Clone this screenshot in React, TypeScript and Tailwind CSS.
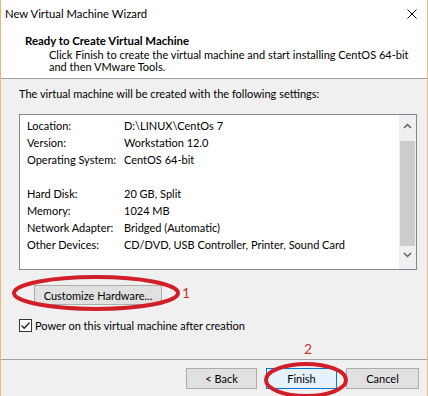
import React from "react";

const rows: [string, string][] = [
  ["Location:", "D:\\LINUX\\CentOs 7"],
  ["Version:", "Workstation 12.0"],
  ["Operating System:", "CentOS 64-bit"],
  ["", ""],
  ["Hard Disk:", "20 GB, Split"],
  ["Memory:", "1024 MB"],
  ["Network Adapter:", "Bridged (Automatic)"],
  ["Other Devices:", "CD/DVD, USB Controller, Printer, Sound Card"],
];

const font = { fontFamily: '"Lato", "Noto Sans", sans-serif' };

const App = () => {
  return (
    <div
      className="relative w-[428px] h-[396px] overflow-hidden bg-[#f0f0f0] border-x border-[#efb56c] text-[11px] text-black leading-[17px] whitespace-nowrap"
      style={font}
    >
      {/* TITLE BAR */}
      <div className="bg-white h-[30px] flex items-start justify-between">
        <span className="pl-[4px] pt-[5px] text-[11.3px]">New Virtual Machine Wizard</span>
        <svg className="mt-[9px] mr-[10px]" width="10" height="10" viewBox="0 0 10 10">
          <path d="M0.5 0.5 L9.5 9.5 M9.5 0.5 L0.5 9.5" stroke="#000" strokeWidth="1" />
        </svg>
      </div>

      {/* HEADER */}
      <div className="bg-white h-[49px] pt-[3px] border-b border-[#a0a0a0]">
        <p className="pl-[24px] font-bold text-[11.4px] leading-[15px]">Ready to Create Virtual Machine</p>
        <p className="pl-[48px] leading-[12px] pt-[1px]">
          Click Finish to create the virtual machine and start installing CentOS 64-bit
          <br />
          and then VMware Tools.
        </p>
      </div>

      {/* BODY */}
      <div className="px-[18px]">
        <p className="pt-[6px]">The virtual machine will be created with the following settings:</p>

        {/* SETTINGS LIST */}
        <div className="mt-[12px] h-[156px] w-[398px] border border-[#828790] bg-white flex">
          <div className="flex-1 pt-[2px] pl-[7px]">
            {rows.map(([k, v], i) => (
              <div key={i} className="flex h-[17px] items-center">
                <span className="w-[97px]">{k}</span>
                <span>{v}</span>
              </div>
            ))}
          </div>
          <div className="w-[17px] bg-[#f0f0f0] flex flex-col items-center">
            <svg className="mt-[8px]" width="9" height="6" viewBox="0 0 9 6">
              <path d="M1 5 L4.5 1.5 L8 5" stroke="#606060" strokeWidth="1.5" fill="none" />
            </svg>
            <div className="mt-[12px] w-[15px] h-[105px] bg-[#cdcdcd]" />
            <svg className="mt-[6px]" width="9" height="6" viewBox="0 0 9 6">
              <path d="M1 1 L4.5 4.5 L8 1" stroke="#606060" strokeWidth="1.5" fill="none" />
            </svg>
          </div>
        </div>

        {/* CUSTOMIZE */}
        <button className="mt-[15px] ml-[15px] w-[128px] h-[20px] border border-[#adadad] bg-[#e1e1e1] flex items-center justify-center">
          Customize Hardware...
        </button>

        {/* POWER ON CHECKBOX */}
        <label className="mt-[12px] flex items-center gap-[3px]">
          <span className="w-[13px] h-[13px] border border-[#333] bg-white flex items-center justify-center">
            <svg width="11" height="11" viewBox="0 0 11 11">
              <path d="M1.5 5.5 L4.2 8.3 L9.5 2.5" stroke="#222" strokeWidth="1.3" fill="none" />
            </svg>
          </span>
          <span>Power on this virtual machine after creation</span>
        </label>
      </div>

      {/* FOOTER */}
      <div className="mt-[25px] border-t border-[#a0a0a0] flex justify-end gap-[9px] pr-[8px] pt-[8px]">
        <button className="w-[71px] h-[21px] border border-[#adadad] bg-[#e1e1e1]">&lt; Back</button>
        <button className="w-[71px] h-[21px] border border-[#0078d7] bg-[#e5f1fb]">Finish</button>
        <button className="w-[73px] h-[21px] border border-[#adadad] bg-[#e1e1e1]">Cancel</button>
      </div>

      {/* ANNOTATIONS */}
      <svg className="absolute left-0 top-0 pointer-events-none" width="428" height="396">
        <ellipse cx="95" cy="293" rx="82" ry="16" fill="none" stroke="#d11f2a" strokeWidth="4" />
        <ellipse cx="305" cy="380" rx="40" ry="16" fill="none" stroke="#d11f2a" strokeWidth="4" />
      </svg>
      <span className="absolute left-[181px] top-[284px] text-[14px] text-[#c0392b]">1</span>
      <span className="absolute left-[303px] top-[340px] text-[14px] text-[#c0392b]">2</span>
    </div>
  );
};

export default App;
